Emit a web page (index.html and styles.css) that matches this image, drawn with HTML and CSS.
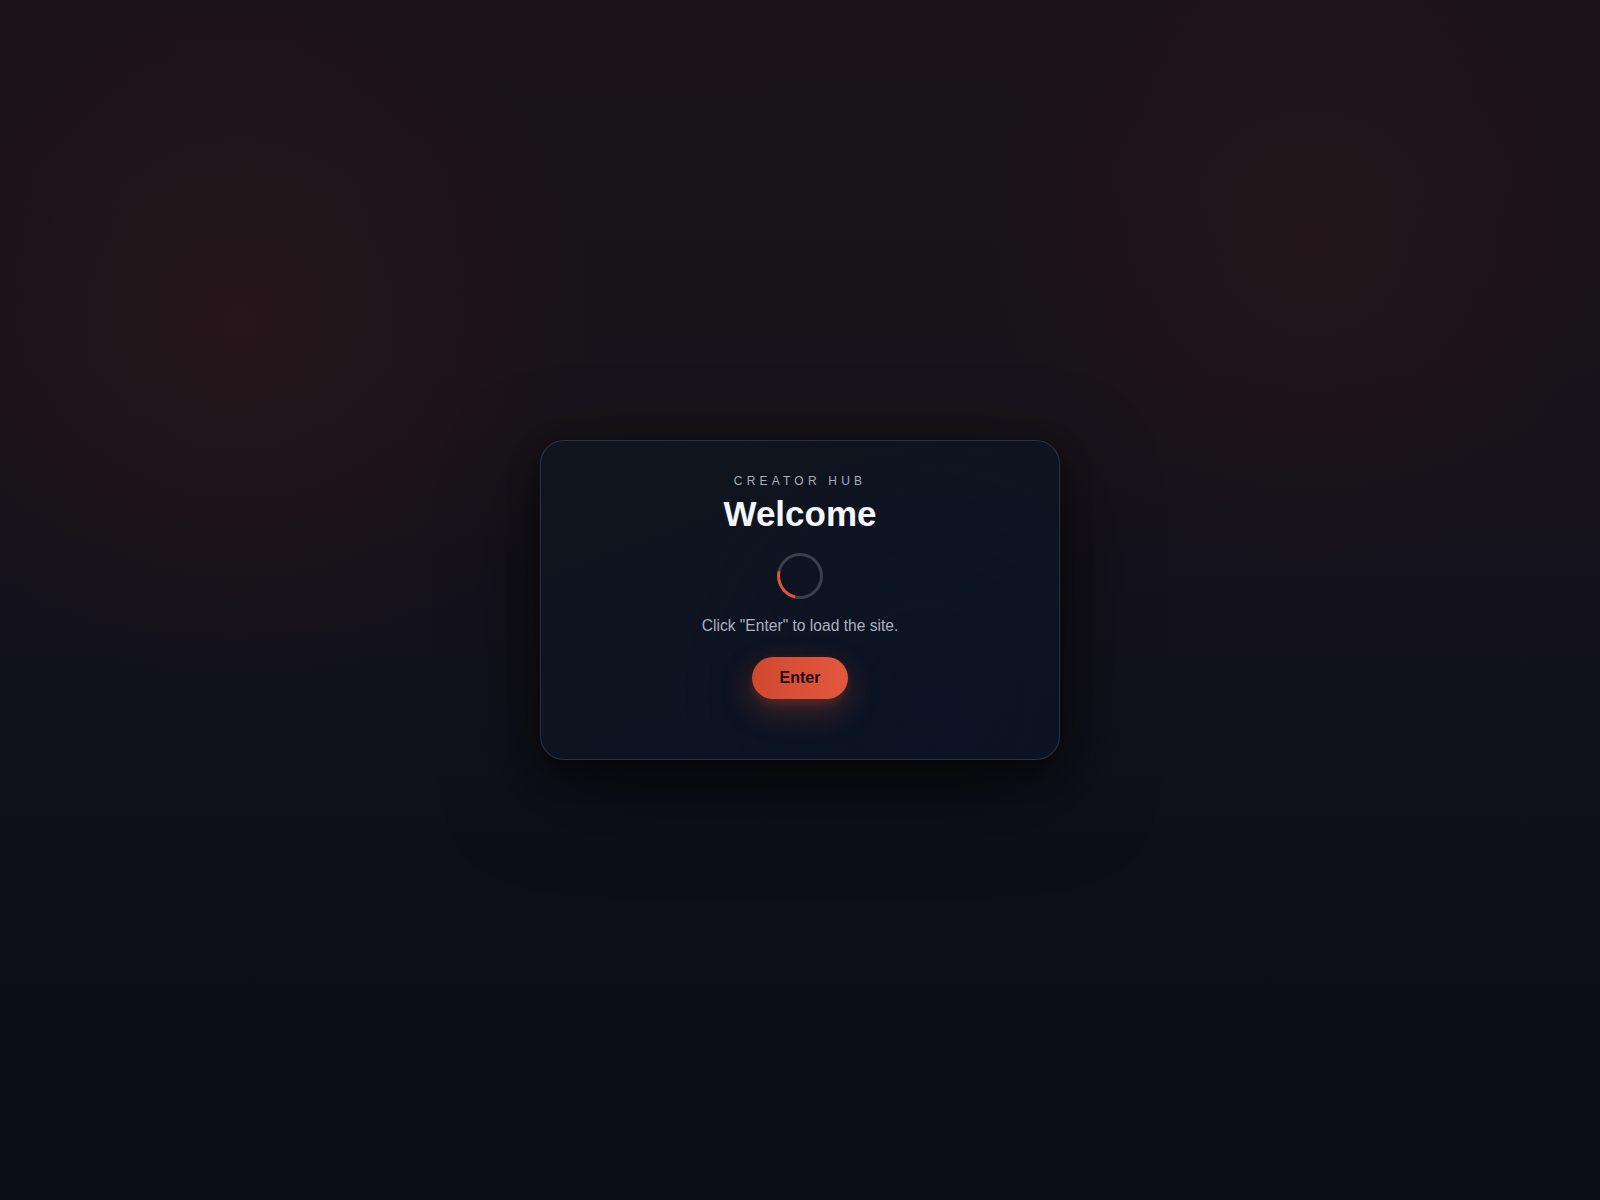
FILE: index.html
```html
<!DOCTYPE html>
<html lang="en">
<head>
<meta charset="utf-8">
<title>Creator Hub</title>
<link rel="stylesheet" href="styles.css">
</head>
<body>
<main class="stage">
  <section class="card">
    <div class="eyebrow">Creator Hub</div>
    <h1 class="title">Welcome</h1>
    <div class="spinner"></div>
    <p class="hint">Click "Enter" to load the site.</p>
    <button class="enter" type="button">Enter</button>
  </section>
</main>
</body>
</html>
```
FILE: styles.css
```css
* { box-sizing: border-box; }
html, body { height: 100%; }
body {
  margin: 0;
  font-family: "Liberation Sans", Arial, sans-serif;
  background-color: #0c0f18;
  background-image:
    radial-gradient(circle at 15% 27%, rgba(52, 24, 27, 0.5) 0%, rgba(52, 24, 27, 0) 22%),
    radial-gradient(circle at 82% 20%, rgba(52, 24, 27, 0.4) 0%, rgba(52, 24, 27, 0) 20%),
    linear-gradient(180deg, #1a1419 0%, #17131a 35%, #0e1019 70%, #0b0e17 100%);
}
.stage {
  min-height: 100vh;
  display: flex;
  align-items: center;
  justify-content: center;
}
.card {
  width: 520px;
  padding: 32px 40px 60px;
  border: 1px solid rgba(255, 255, 255, 0.13);
  border-radius: 24px;
  background:
    radial-gradient(circle at 75% 80%, rgba(10, 20, 38, 0.6) 0%, rgba(10, 20, 38, 0) 55%),
    linear-gradient(160deg, #10141e 0%, #0e1320 60%, #0b1221 100%);
  box-shadow: 0 30px 90px rgba(0, 0, 0, 0.55), 0 10px 30px rgba(0, 0, 0, 0.35);
  display: flex;
  flex-direction: column;
  align-items: center;
  text-align: center;
}
.eyebrow {
  font-size: 12px;
  line-height: 16px;
  letter-spacing: 0.35em;
  text-transform: uppercase;
  color: #a7adbb;
}
.title {
  margin: 4px 0 0;
  font-size: 35px;
  line-height: 42px;
  font-weight: 700;
  color: #f3f6fc;
}
.spinner {
  margin-top: 18px;
  width: 46px;
  height: 46px;
  border-radius: 50%;
  border: 3px solid #3b3f49;
  border-left-color: #e0553a;
  transform: rotate(-32deg);
}
.hint {
  margin: 15px 0 0;
  font-size: 15.6px;
  line-height: 24px;
  color: #aab1c0;
}
.enter {
  margin-top: 19px;
  padding: 12px 28px;
  font-family: inherit;
  font-size: 16px;
  line-height: 18px;
  font-weight: 700;
  color: #1a0c09;
  border: none;
  border-radius: 999px;
  background: linear-gradient(90deg, #cf4830 0%, #dc5239 60%, #e2583e 100%);
  box-shadow: 0 12px 32px rgba(224, 85, 58, 0.28), 0 4px 10px rgba(224, 85, 58, 0.18);
  cursor: pointer;
}
```
